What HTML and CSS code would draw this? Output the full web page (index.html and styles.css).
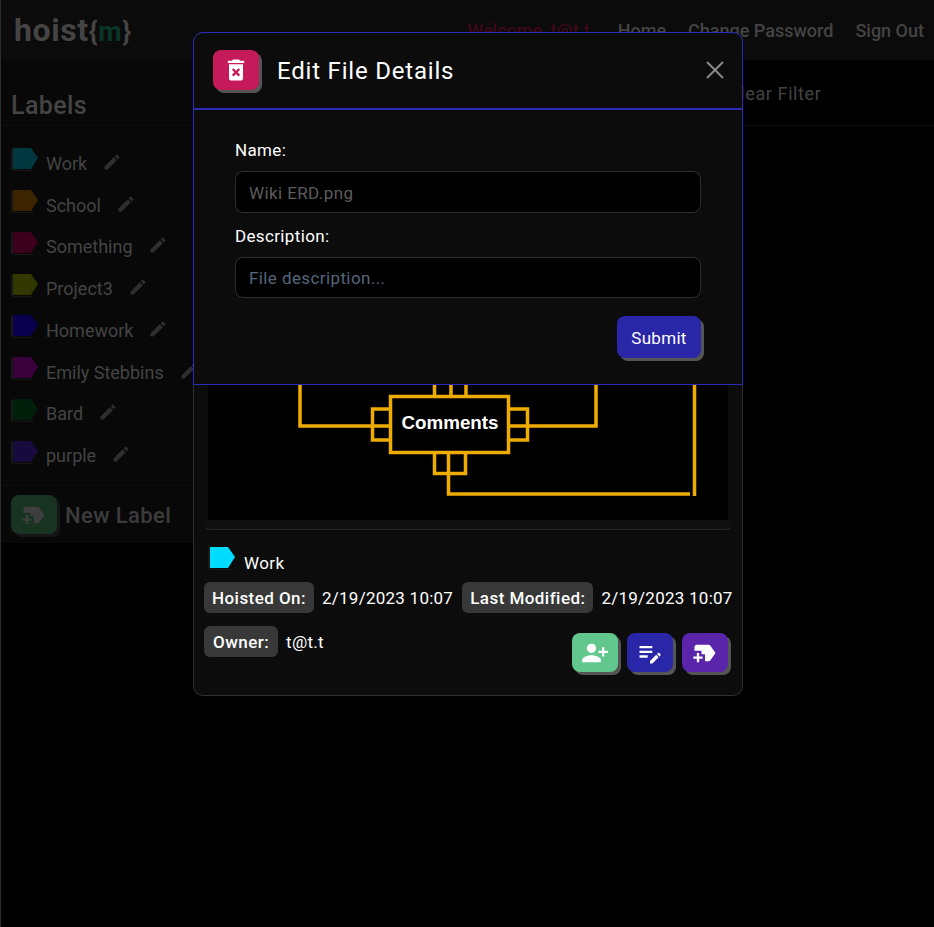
FILE: index.html
```html
<!DOCTYPE html>
<html lang="en">
<head>
    <meta charset="UTF-8">
    <meta name="viewport" content="width=device-width, initial-scale=1.0">
    <title>hoist{m}</title>
    <link rel="stylesheet" href="styles.css">
</head>
<body>

    <svg class="defs" aria-hidden="true">
        <symbol id="i-tag" viewBox="0 0 28 23">
            <path class="tag-back" d="M0 1h2v22h20v-1H0z"/>
            <path d="M2 0h18l7 10-7 11H2z"/>
        </symbol>
        <symbol id="i-edit" viewBox="0 0 24 24">
            <path d="M3 17.25V21h3.75L17.81 9.94l-3.75-3.75L3 17.25zM20.71 7.04c.39-.39.39-1.02 0-1.41l-2.34-2.34a.9959.9959 0 0 0-1.41 0l-1.83 1.83 3.75 3.75 1.83-1.83z"/>
        </symbol>
        <symbol id="i-newlabel" viewBox="0 0 24 24">
            <path d="M21 12l-4.37 6.16c-.37.52-.98.84-1.63.84h-3v-6H9v-3H3V7c0-1.1.9-2 2-2h10c.65 0 1.26.32 1.63.84L21 12zm-11 3H7v-3H5v3H2v2h3v3h2v-3h3v-2z"/>
        </symbol>
    </svg>

    <nav class="navbar">
        <div class="brand">hoist<span class="brace">{<span class="brand-m">m</span>}</span></div>
        <div class="nav-links">
            <span class="welcome">Welcome, t@t.t</span>
            <a>Home</a>
            <a>Change Password</a>
            <a>Sign Out</a>
        </div>
    </nav>

    <div class="layout">
        <aside class="sidebar">
            <h2 class="sidebar-title">Labels</h2>
            <ul class="label-list">
                <li><svg class="tag tag-work"><use href="#i-tag"/></svg><span>Work</span><svg class="pencil"><use href="#i-edit"/></svg></li>
                <li><svg class="tag tag-school"><use href="#i-tag"/></svg><span>School</span><svg class="pencil"><use href="#i-edit"/></svg></li>
                <li><svg class="tag tag-something"><use href="#i-tag"/></svg><span>Something</span><svg class="pencil"><use href="#i-edit"/></svg></li>
                <li><svg class="tag tag-project"><use href="#i-tag"/></svg><span>Project3</span><svg class="pencil"><use href="#i-edit"/></svg></li>
                <li><svg class="tag tag-homework"><use href="#i-tag"/></svg><span>Homework</span><svg class="pencil"><use href="#i-edit"/></svg></li>
                <li><svg class="tag tag-emily"><use href="#i-tag"/></svg><span>Emily Stebbins</span><svg class="pencil"><use href="#i-edit"/></svg></li>
                <li><svg class="tag tag-bard"><use href="#i-tag"/></svg><span>Bard</span><svg class="pencil"><use href="#i-edit"/></svg></li>
                <li><svg class="tag tag-purple"><use href="#i-tag"/></svg><span>purple</span><svg class="pencil"><use href="#i-edit"/></svg></li>
            </ul>
            <div class="new-label">
                <span class="new-label-btn"><svg><use href="#i-newlabel"/></svg></span>
                <span class="new-label-text">New Label</span>
            </div>
        </aside>
        <main class="content">
            <div class="filter-bar"><span>Clear Filter</span></div>
        </main>
    </div>

    <!-- file details, mostly covered by the edit dialog -->
    <section class="modal details-modal">
        <div class="preview">
            <svg viewBox="208 340 520 180" width="520" height="180">
                <g class="erd">
                    <path d="M300 340V426H390"/>
                    <path d="M596 340V426H508"/>
                    <path d="M694.500 340V496"/>
                    <path d="M690 494H448.500V454"/>
                    <rect x="390.500" y="396.500" width="118" height="56"/>
                    <path d="M390 409H372.500V440H390"/>
                    <path d="M510 409H527.500V440H510"/>
                    <path d="M434.500 454V473.500H465.500V454"/>
                    <path d="M434.500 340V395M451 340V395M466 340V395"/>
                </g>
                <text class="erd-text" x="450" y="429" text-anchor="middle">Comments</text>
            </svg>
        </div>
        <div class="preview-edge"></div>
        <div class="file-label">
            <svg class="tag tag-cyan"><use href="#i-tag"/></svg>
            <span>Work</span>
        </div>
        <div class="meta-row">
            <span class="pill">Hoisted On:</span>
            <span class="meta-value">2/19/2023 10:07</span>
            <span class="pill pill-next">Last Modified:</span>
            <span class="meta-value">2/19/2023 10:07</span>
        </div>
        <div class="owner-row">
            <span class="pill pill-owner">Owner:</span>
            <span class="meta-value">t@t.t</span>
            <div class="actions">
                <span class="square-btn btn-green">
                    <svg viewBox="0 0 24 24"><path d="M13 8c0-2.210-1.790-4-4-4S5 5.790 5 8s1.790 4 4 4 4-1.790 4-4zm2 2v2h3v3h2v-3h3v-2h-3V7h-2v3h-3zM1 18v2h16v-2c0-2.660-5.330-4-8-4s-8 1.340-8 4z"/></svg>
                </span>
                <span class="square-btn btn-blue">
                    <svg viewBox="0 0 24 24"><path d="M3 10h11v2H3zm0-2h11V6H3zm0 8h7v-2H3zm15.010-3.130.71-.71c.39-.39 1.020-.39 1.410 0l.71.71c.39.39.39 1.020 0 1.410l-.71.71-2.120-2.120zm-.71.71-5.300 5.300V21h2.120l5.300-5.300-2.120-2.120z"/></svg>
                </span>
                <span class="square-btn btn-purple">
                    <svg><use href="#i-newlabel"/></svg>
                </span>
            </div>
        </div>
    </section>

    <section class="modal edit-modal">
        <header class="edit-header">
            <span class="square-btn btn-pink">
                <svg viewBox="0 0 24 24"><path d="M6 19c0 1.100.9 2 2 2h8c1.100 0 2-.9 2-2V7H6v12zm2.460-7.120 1.410-1.410L12 12.590l2.120-2.120 1.410 1.410L13.410 14l2.120 2.120-1.410 1.410L12 15.410l-2.120 2.120-1.410-1.410L10.590 14l-2.130-2.120zM15.500 4l-1-1h-5l-1 1H5v2h14V4z"/></svg>
            </span>
            <h2 class="edit-title">Edit File Details</h2>
            <svg class="close" viewBox="0 0 18 18"><path d="M1 1l16 16M17 1L1 17"/></svg>
        </header>
        <form class="edit-form">
            <label for="file-name">Name:</label>
            <input id="file-name" type="text" value="Wiki ERD.png">
            <label for="file-desc">Description:</label>
            <input id="file-desc" type="text" placeholder="File description...">
            <button type="button" class="submit">Submit</button>
        </form>
    </section>

</body>
</html>
```

FILE: styles.css
```css
* {
    box-sizing: border-box;
}
body {
    font-family: Roboto, Arial, sans-serif;
    background-color: #000;
    color: #444;
    margin: 0;
    min-height: 927px;
    border-left: 1px solid #2c2c30;
    overflow: hidden;
}
.defs {
    display: none;
}

.navbar {
    display: flex;
    justify-content: space-between;
    align-items: center;
    height: 60px;
    padding: 0 10px 0 13px;
    background-color: #0b0b0b;
}
.brand {
    font-size: 32px;
    font-weight: 700;
    letter-spacing: 0.6px;
    color: #444;
}
.brace {
    font-size: 27px;
}
.brand-m {
    color: #0c3528;
}
.nav-links {
    display: flex;
    gap: 22px;
    font-size: 18px;
    font-weight: 500;
}
.welcome {
    color: #3f081b;
    margin-right: 6px;
}

.layout {
    display: flex;
    align-items: flex-start;
}
.sidebar {
    width: 240px;
    background-color: #080808;
}
.sidebar-title {
    margin: 0;
    height: 66px;
    padding: 31px 10px 0;
    font-size: 25px;
    line-height: 30px;
    font-weight: 500;
    letter-spacing: 0.4px;
    border-bottom: 1px solid #0f0f0f;
}
.label-list {
    list-style: none;
    margin: 0;
    padding: 15px 0 10px 10px;
}
.label-list li {
    display: flex;
    align-items: center;
    height: 41.75px;
    font-size: 18px;
}
.label-list span {
    margin-top: 3px;
}
.tag {
    width: 28px;
    height: 23px;
    flex: none;
    margin-top: -4px;
    margin-right: 7px;
}
.tag-back {
    fill: #181818;
}
.tag-work { fill: #013840; }
.tag-school { fill: #3d2400; }
.tag-something { fill: #3c001c; }
.tag-project { fill: #333700; }
.tag-homework { fill: #09004e; }
.tag-emily { fill: #3a003c; }
.tag-bard { fill: #00200c; }
.tag-purple { fill: #170a3c; }
.tag-cyan { fill: #00dcff; }
.pencil {
    width: 20px;
    height: 20px;
    flex: none;
    margin-left: 15px;
    fill: #2e2e2e;
}
.new-label {
    display: flex;
    align-items: center;
    gap: 8px;
    height: 58px;
    padding: 0 10px;
    border-top: 1px solid #0f0f0f;
    font-size: 22px;
    font-weight: 500;
    letter-spacing: 0.4px;
    color: #3c3c3c;
}
.new-label-text {
    margin-top: 2px;
}
.new-label-btn {
    display: flex;
    align-items: center;
    justify-content: center;
    width: 46px;
    height: 39px;
    border-radius: 8px;
    background-color: #183322;
    box-shadow: 3px 3px 0 #161616;
    fill: #3e3e3e;
}
.new-label-btn svg {
    width: 28px;
    height: 28px;
}

.content {
    flex: 1;
}
.filter-bar {
    height: 66px;
    padding: 24px 0 0 487px;
    font-size: 18px;
    line-height: 20px;
    letter-spacing: 0.6px;
    border-bottom: 1px solid #0c0c0c;
}

/* dialogs */
.modal {
    position: absolute;
    left: 193px;
    width: 550px;
    background-color: #0c0c0c;
    color: #fff;
}
.details-modal {
    top: 32px;
    height: 664px;
    padding: 307px 14px 0 11px;
    border: 1px solid #303030;
    border-radius: 10px;
}
.preview {
    height: 180px;
    margin-left: 3px;
    background-color: #000;
}
.preview svg {
    display: block;
}
.erd {
    fill: none;
    stroke: #eeab00;
    stroke-width: 3.500;
}
.erd-text {
    font-family: "Liberation Sans", Arial, sans-serif;
    font-size: 18.800px;
    font-weight: 700;
    fill: #fff;
}
.preview-edge {
    height: 10px;
    width: 528px;
    margin-left: -1px;
    margin-bottom: 17px;
    background-color: #101010;
    border-bottom: 1px solid #282828;
    border-radius: 0 0 6px 6px;
}
.file-label {
    display: flex;
    align-items: center;
    margin-left: 3px;
    height: 24px;
    font-size: 17px;
    letter-spacing: 0.4px;
}
.file-label .tag {
    margin-top: -2px;
    margin-right: 8px;
}
.file-label span {
    margin-top: 8px;
}
.meta-row,
.owner-row {
    display: flex;
    align-items: flex-start;
    margin-left: -1px;
    margin-right: -3px;
    font-size: 17px;
    letter-spacing: 0.25px;
}
.meta-row {
    margin-top: 11px;
    margin-bottom: 12px;
}
.pill {
    display: block;
    height: 31px;
    padding: 1px 8px 0;
    line-height: 31px;
    border-radius: 6px;
    background-color: #383838;
    font-weight: 500;
    letter-spacing: 0.45px;
    white-space: nowrap;
}
.pill-next {
    margin-left: 9px;
}
.pill-owner {
    padding: 1px 9px 0;
}
.meta-value {
    margin-left: 8px;
    padding-top: 1px;
    line-height: 31px;
    white-space: nowrap;
}
.actions {
    display: flex;
    gap: 9px;
    margin-left: auto;
    margin-top: 7px;
    margin-right: 3px;
}
.square-btn {
    display: flex;
    align-items: center;
    justify-content: center;
    width: 46px;
    height: 39px;
    border-radius: 8px;
    box-shadow: 3px 3px 0 #555;
    fill: #fff;
}
.square-btn svg {
    width: 28px;
    height: 28px;
}
.btn-green { background-color: #61c78c; }
.btn-blue { background-color: #2926a8; }
.btn-purple { background-color: #5a25ab; }
.btn-pink {
    background-color: #c51b5a;
    height: 40px;
}

.edit-modal {
    top: 32px;
    height: 353px;
    border: 1px solid #2d2ab5;
    border-radius: 10px 10px 0 0;
}
.edit-header {
    display: flex;
    align-items: center;
    height: 77px;
    padding: 0 18px 1px 19px;
    border-bottom: 2px solid #2d2ab5;
}
.edit-title {
    margin: 2px 0 0 18px;
    flex: 1;
    font-size: 24px;
    font-weight: 400;
    letter-spacing: 0.8px;
}
.close {
    width: 18px;
    height: 18px;
    margin-top: -1px;
    fill: none;
    stroke: #8a8a8a;
    stroke-width: 2;
}
.edit-form {
    display: flex;
    flex-direction: column;
    align-items: flex-start;
    padding: 30px 41px 0;
    font-size: 17px;
}
.edit-form label {
    height: 20px;
    line-height: 20px;
    margin-bottom: 11px;
    letter-spacing: 0.35px;
}
.edit-form input {
    width: 466px;
    height: 42px;
    margin-bottom: 13px;
    padding: 2px 13px 0;
    background-color: #000;
    border: 1px solid #2e2e2e;
    border-radius: 8px;
    font-family: inherit;
    font-size: 17px;
    letter-spacing: 0.4px;
    color: #5c5c5c;
}
#file-desc {
    height: 41px;
    margin-bottom: 14px;
    padding-top: 0;
}
.edit-form input::placeholder {
    color: #56657a;
}
.submit {
    align-self: flex-end;
    width: 84px;
    height: 42px;
    margin-top: 4px;
    padding-top: 3px;
    background-color: #2926a8;
    color: #fff;
    border: none;
    border-radius: 8px;
    box-shadow: 3px 3px 0 #555;
    font-family: inherit;
    font-size: 17px;
    letter-spacing: 0.3px;
    cursor: pointer;
}
```
